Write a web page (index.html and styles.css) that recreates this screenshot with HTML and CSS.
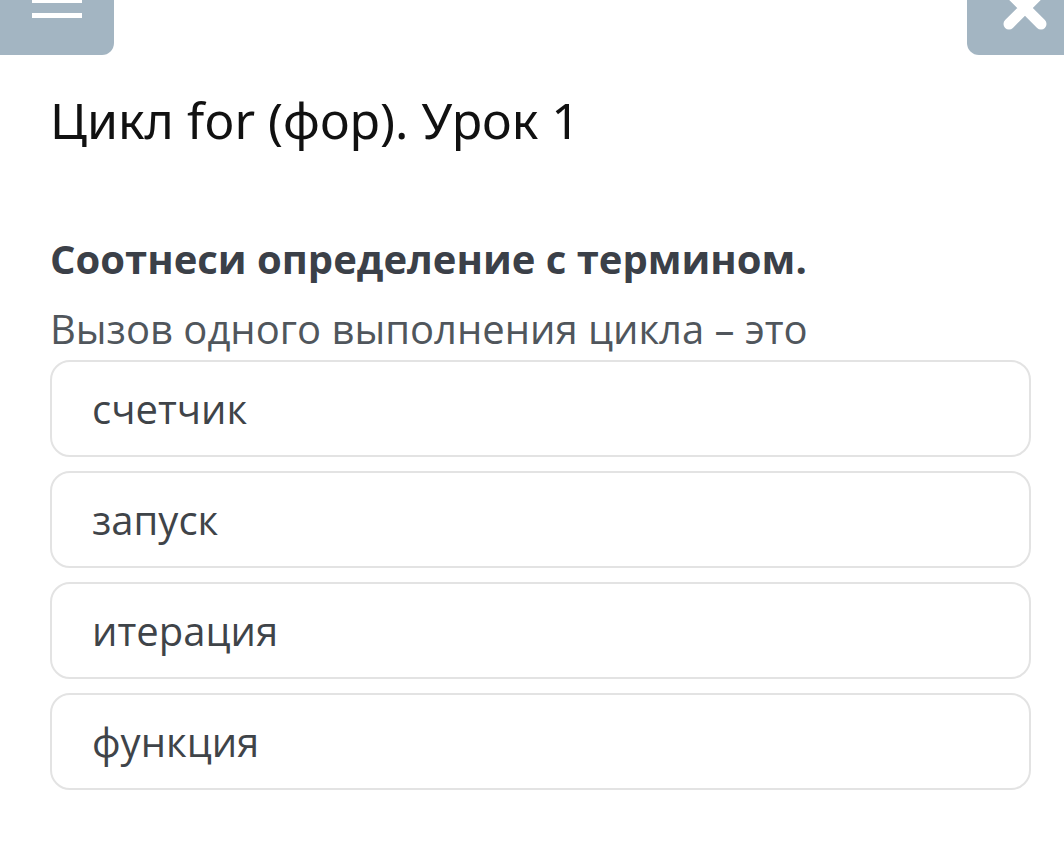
FILE: index.html
```html
<!DOCTYPE html>
<html lang="ru">
<head>
  <meta charset="UTF-8">
  <title>Цикл for (фор). Урок 1</title>
  <link rel="stylesheet" href="styles.css">
</head>
<body>
  <div class="topbar">
    <button class="top-btn btn-menu" aria-label="Меню">
      <span class="bar bar-1"></span>
      <span class="bar bar-2"></span>
    </button>
    <button class="top-btn btn-close" aria-label="Закрыть">
      <svg width="60" height="40" viewBox="0 0 60 40">
        <path d="M14 -8 L46 24 M46 -8 L14 24" stroke="#fff" stroke-width="11" stroke-linecap="round" fill="none"/>
      </svg>
    </button>
  </div>

  <div class="content">
    <h1 class="lesson-title">Цикл for (фор). Урок 1</h1>

    <h2 class="task">Соотнеси определение с термином.</h2>
    <p class="question">Вызов одного выполнения цикла – это</p>

    <div class="options">
      <div class="option">счетчик</div>
      <div class="option">запуск</div>
      <div class="option">итерация</div>
      <div class="option">функция</div>
    </div>
  </div>
</body>
</html>
```

FILE: styles.css
```css
body {
  margin: 0;
  background: #fff;
  font-family: 'Open Sans', sans-serif;
  color: #3f4449;
}

.topbar {
  display: flex;
  justify-content: space-between;
  height: 55px;
}

.top-btn {
  border: none;
  padding: 0;
  background: #a3b5c2;
  cursor: pointer;
  overflow: hidden;
  position: relative;
}

.btn-menu {
  width: 114px;
  border-bottom-right-radius: 12px;
}

.btn-close {
  width: 97px;
  border-bottom-left-radius: 12px;
}

.bar {
  position: absolute;
  left: 32px;
  width: 50px;
  height: 5px;
  background: #fff;
}

.bar-1 {
  top: -2px;
}

.bar-2 {
  top: 13px;
}

.btn-close svg {
  position: absolute;
  top: 0;
  left: 28px;
}

.content {
  padding: 0 33px 0 50px;
}

.lesson-title {
  margin: 31px 0 0;
  font-family: 'Noto Sans', 'Open Sans', sans-serif;
  font-weight: 400;
  font-size: 50px;
  line-height: 68px;
  color: #111;
}

.task {
  margin: 78px 0 0;
  font-size: 40px;
  font-weight: 700;
  line-height: 54px;
  color: #3b4048;
}

.question {
  margin: 16px 0 0;
  font-size: 40px;
  line-height: 54px;
  color: #50565c;
}

.options {
  display: flex;
  flex-direction: column;
  gap: 14px;
  margin-top: 4px;
}

.option {
  height: 93px;
  padding-left: 40px;
  display: flex;
  align-items: center;
  border: 2px solid #e3e3e3;
  border-radius: 20px;
  font-size: 40px;
  color: #3f4449;
}
```
